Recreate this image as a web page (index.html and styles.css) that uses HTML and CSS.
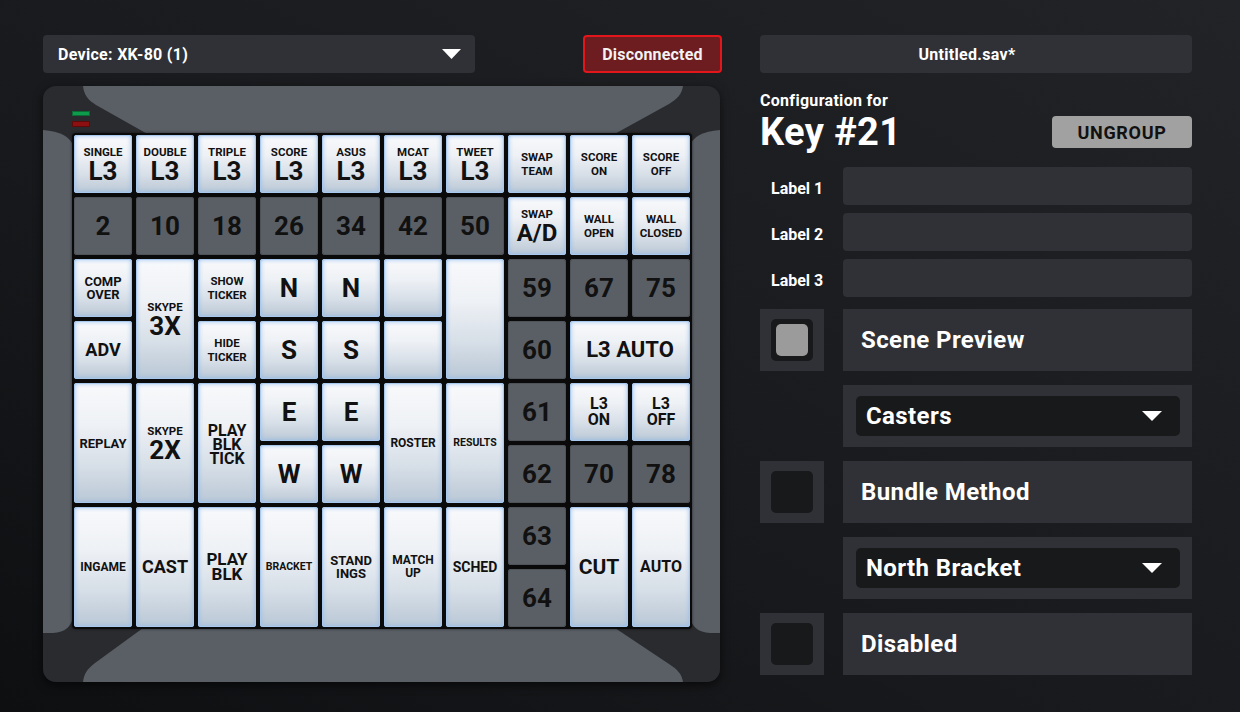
FILE: index.html
```html
<!DOCTYPE html>
<html>
<head>
<meta charset="utf-8">
<link rel="stylesheet" href="styles.css">
</head>
<body>
<div class="app">
  <section class="left">
    <div class="topbar">
      <div class="device-select">
        <span>Device: XK-80 (1)</span>
        <svg class="tri" width="19" height="10" viewBox="0 0 19 10"><polygon points="0,0 19,0 9.5,10" fill="#fff"/></svg>
      </div>
      <div class="status">Disconnected</div>
    </div>

    <div class="device">
      <svg class="device-bg" width="677" height="596" viewBox="0 0 677 596">
        <rect x="0" y="0" width="677" height="596" rx="13" fill="#2a2b2e"/>
        <path d="M40,0 C41,9 45,14 53,19 L108,50 L568,50 L626,18 C634,13 639,8 640,0 Z" fill="#5a5f66"/>
        <path d="M0,44 Q26,46 30,60 L30,530 Q28,546 10,547 L0,547 Z" fill="#5a5f66"/>
        <path d="M677,44 Q651,46 647,60 L647,530 Q649,546 667,547 L677,547 Z" fill="#5a5f66"/>
        <path d="M40,596 C41,588 44,583 52,577 L100,542 L572,542 L626,578 C634,583 639,588 640,596 Z" fill="#5a5f66"/>
      </svg>
      <div class="leds">
        <div class="led green"></div>
        <div class="led red"></div>
      </div>
      <div class="keys">
        <!-- row 1 -->
        <div class="key l"><span class="s">SINGLE</span><span class="b">L3</span></div>
        <div class="key l"><span class="s">DOUBLE</span><span class="b">L3</span></div>
        <div class="key l"><span class="s">TRIPLE</span><span class="b">L3</span></div>
        <div class="key l"><span class="s">SCORE</span><span class="b">L3</span></div>
        <div class="key l"><span class="s">ASUS</span><span class="b">L3</span></div>
        <div class="key l"><span class="s">MCAT</span><span class="b">L3</span></div>
        <div class="key l"><span class="s">TWEET</span><span class="b">L3</span></div>
        <div class="key l two">SWAP<br>TEAM</div>
        <div class="key l two">SCORE<br>ON</div>
        <div class="key l two">SCORE<br>OFF</div>
        <!-- row 2 -->
        <div class="key d">2</div>
        <div class="key d">10</div>
        <div class="key d">18</div>
        <div class="key d">26</div>
        <div class="key d">34</div>
        <div class="key d">42</div>
        <div class="key d">50</div>
        <div class="key l"><span class="s">SWAP</span><span class="b ad">A/D</span></div>
        <div class="key l two">WALL<br>OPEN</div>
        <div class="key l two">WALL<br>CLOSED</div>
        <!-- row 3 -->
        <div class="key l two f13">COMP<br>OVER</div>
        <div class="key l r2"><span class="s">SKYPE</span><span class="b">3X</span></div>
        <div class="key l two">SHOW<br>TICKER</div>
        <div class="key l big">N</div>
        <div class="key l big">N</div>
        <div class="key l"></div>
        <div class="key l r2"></div>
        <div class="key d">59</div>
        <div class="key d">67</div>
        <div class="key d">75</div>
        <!-- row 4 -->
        <div class="key l f18">ADV</div>
        <div class="key l two">HIDE<br>TICKER</div>
        <div class="key l big">S</div>
        <div class="key l big">S</div>
        <div class="key l"></div>
        <div class="key d">60</div>
        <div class="key l c2 f22">L3 AUTO</div>
        <!-- row 5 -->
        <div class="key l r2 f13">REPLAY</div>
        <div class="key l r2"><span class="s">SKYPE</span><span class="b">2X</span></div>
        <div class="key l r2 f16 lh14 down">PLAY<br>BLK<br>TICK</div>
        <div class="key l big">E</div>
        <div class="key l big">E</div>
        <div class="key l r2 f12">ROSTER</div>
        <div class="key l r2 f105">RESULTS</div>
        <div class="key d">61</div>
        <div class="key l f15 lh16">L3<br>ON</div>
        <div class="key l f15 lh16">L3<br>OFF</div>
        <!-- row 6 -->
        <div class="key l big">W</div>
        <div class="key l big">W</div>
        <div class="key d">62</div>
        <div class="key d">70</div>
        <div class="key d">78</div>
        <!-- row 7 -->
        <div class="key l r2 f12">INGAME</div>
        <div class="key l r2 f18">CAST</div>
        <div class="key l r2 f17 lh15">PLAY<br>BLK</div>
        <div class="key l r2 f105">BRACKET</div>
        <div class="key l r2 two f13">STAND<br>INGS</div>
        <div class="key l r2 two f12">MATCH<br>UP</div>
        <div class="key l r2 f14">SCHED</div>
        <div class="key d">63</div>
        <div class="key l r2 f21">CUT</div>
        <div class="key l r2 f16">AUTO</div>
        <!-- row 8 -->
        <div class="key d">64</div>
      </div>
    </div>
  </section>

  <section class="right">
    <div class="file">Untitled.sav*</div>
    <div class="config-for">Configuration for</div>
    <div class="title-row">
      <div class="key-title">Key #21</div>
      <div class="ungroup">UNGROUP</div>
    </div>
    <div class="labels">
      <div class="label-row"><span class="label">Label 1</span><div class="input"></div></div>
      <div class="label-row"><span class="label">Label 2</span><div class="input"></div></div>
      <div class="label-row"><span class="label">Label 3</span><div class="input"></div></div>
    </div>
    <div class="options">
      <div class="opt-row">
        <div class="check-cell"><div class="check on"></div></div>
        <div class="field">Scene Preview</div>
      </div>
      <div class="opt-row">
        <div class="spacer"></div>
        <div class="field select">
          <div class="dropdown"><span>Casters</span><svg width="20" height="10" viewBox="0 0 20 10"><polygon points="0,0 20,0 10,10" fill="#fff"/></svg></div>
        </div>
      </div>
      <div class="opt-row">
        <div class="check-cell"><div class="check"></div></div>
        <div class="field">Bundle Method</div>
      </div>
      <div class="opt-row">
        <div class="spacer"></div>
        <div class="field select">
          <div class="dropdown"><span>North Bracket</span><svg width="20" height="10" viewBox="0 0 20 10"><polygon points="0,0 20,0 10,10" fill="#fff"/></svg></div>
        </div>
      </div>
      <div class="opt-row">
        <div class="check-cell"><div class="check"></div></div>
        <div class="field">Disabled</div>
      </div>
    </div>
  </section>
</div>
</body>
</html>
```

FILE: styles.css
```css
* { box-sizing: border-box; }

html, body {
  margin: 0;
  padding: 0;
}

body {
  width: 1240px;
  height: 712px;
  overflow: hidden;
  background: linear-gradient(30deg, #0e0f11 0%, #18191c 40%, #222327 100%);
  font-family: Roboto, "Liberation Sans", sans-serif;
  color: #fff;
}

.app {
  display: flex;
  gap: 38px;
  padding: 35px 48px 0 43px;
}

/* ---------- left ---------- */
.left {
  width: 679px;
  display: flex;
  flex-direction: column;
}

.topbar {
  display: flex;
  justify-content: space-between;
  height: 38px;
}

.device-select {
  width: 432px;
  height: 38px;
  background: #2f3136;
  border-radius: 4px;
  display: flex;
  align-items: center;
  justify-content: space-between;
  padding: 0 14px 0 15px;
  font-size: 16px;
  letter-spacing: 0.3px;
  font-weight: 700;
}

.status {
  width: 139px;
  height: 38px;
  background: #6d1c1f;
  border: 2px solid #e3161b;
  border-radius: 4px;
  display: flex;
  align-items: center;
  justify-content: center;
  font-size: 16px;
  letter-spacing: 0.2px;
  font-weight: 700;
  color: #f2f2f2;
}

.device {
  position: relative;
  margin-top: 13px;
  width: 677px;
  height: 596px;
  border-radius: 13px;
  box-shadow: 0 3px 10px rgba(0, 0, 0, 0.6);
  padding: 25px 0 0 29px;
}

.device-bg {
  position: absolute;
  left: 0;
  top: 0;
  z-index: 0;
}

.leds {
  position: relative;
  z-index: 1;
  display: flex;
  flex-direction: column;
  gap: 5px;
  height: 16px;
}

.led {
  width: 18px;
  height: 5px;
  border-radius: 1px;
}
.led.green { background: #0f9b4c; box-shadow: inset 0 0 0 1px #0a6b33; }
.led.red { background: #8c1011; height: 6px; box-shadow: inset 0 0 0 1px #5e0a0b; }

.keys {
  position: relative;
  z-index: 1;
  margin-top: 6px;
  width: 620px;
  padding: 2px;
  background: #0a0a0a;
  border-radius: 4px;
  box-shadow: 0 0 3px rgba(0, 0, 0, 0.6);
  display: grid;
  grid-template-columns: repeat(10, 58px);
  grid-auto-rows: 58px;
  gap: 4px;
}

.key {
  border-radius: 3px;
  display: flex;
  flex-direction: column;
  align-items: center;
  justify-content: center;
  text-align: center;
  font-family: Roboto, "Liberation Sans", sans-serif;
  font-weight: 700;
  color: #111;
  line-height: 1;
}

.key.l {
  background: linear-gradient(180deg, #f8f9fb 0%, #eef1f5 35%, #d6dee7 70%, #b9c7d5 100%);
  box-shadow: inset 0 0 0 1px #a8c8ee, inset 0 0 4px 1px rgba(140, 185, 240, 0.75);
}

.key.d {
  background: #5a5f66;
  box-shadow: inset 0 0 0 1px #4e535a;
  font-size: 26px;
}

.key.r2 { grid-row: span 2; }
.key.c2 { grid-column: span 2; }

.key .s {
  font-size: 11.5px;
  line-height: 14px;
}
.key .b {
  font-size: 26px;
  line-height: 24px;
}
.key .b.ad {
  font-size: 24px;
}

.key.two {
  font-size: 11.5px;
  line-height: 14px;
}
.key.big { font-size: 26px; }
.key.lh14 { line-height: 14px; }
.key.lh15 { line-height: 15px; }
.key.lh16 { line-height: 16px; }
.key.down { padding-top: 4px; }

.key.f105 { font-size: 10.5px; }
.key.f12 { font-size: 12px; }
.key.f13 { font-size: 13px; }
.key.two.f13 { line-height: 13.5px; }
.key.two.f12 { line-height: 13.5px; }
.key.f14 { font-size: 14px; }
.key.f15 { font-size: 16px; }
.key.f16 { font-size: 16px; }
.key.f17 { font-size: 17px; }
.key.f18 { font-size: 18px; }
.key.f21 { font-size: 21px; }
.key.f22 { font-size: 22px; }

/* ---------- right ---------- */
.right {
  width: 432px;
  display: flex;
  flex-direction: column;
}

.file {
  height: 38px;
  background: #2f3136;
  border-radius: 4px;
  display: flex;
  align-items: center;
  justify-content: center;
  padding-right: 18px;
  font-size: 16px;
  letter-spacing: 0.3px;
  font-weight: 700;
}

.config-for {
  margin-top: 20px;
  font-size: 16px;
  letter-spacing: 0.3px;
  line-height: 16px;
  font-weight: 700;
}

.title-row {
  margin-top: 4px;
  height: 38px;
  display: flex;
  align-items: center;
  justify-content: space-between;
}

.key-title {
  font-size: 38px;
  line-height: 38px;
  letter-spacing: 0.4px;
  font-weight: 700;
}

.ungroup {
  width: 140px;
  height: 32px;
  background: #a1a1a1;
  border-radius: 4px;
  color: #111;
  font-size: 18px;
  letter-spacing: 0.7px;
  font-weight: 700;
  display: flex;
  align-items: center;
  justify-content: center;
}

.labels {
  margin-top: 16px;
  display: flex;
  flex-direction: column;
  gap: 8px;
}

.label-row {
  display: flex;
  height: 38px;
}

.label {
  width: 83px;
  padding: 4px 0 0 11px;
  display: flex;
  align-items: center;
  font-size: 16px;
  font-weight: 700;
}

.input {
  flex: 1;
  background: #2f3136;
  border-radius: 4px;
}

.options {
  margin-top: 12px;
  display: flex;
  flex-direction: column;
  gap: 14px;
}

.opt-row {
  display: grid;
  grid-template-columns: 64px 349px;
  column-gap: 19px;
  height: 62px;
}

.check-cell {
  background: #2f3136;
  display: flex;
  align-items: center;
  justify-content: center;
}

.check {
  width: 42px;
  height: 42px;
  border-radius: 5px;
  background: #18191b;
  display: flex;
  align-items: center;
  justify-content: center;
}

.check.on::after {
  content: "";
  width: 32px;
  height: 32px;
  border-radius: 5px;
  background: #9b9b9b;
}

.field {
  background: #2f3136;
  display: flex;
  align-items: center;
  padding-left: 18px;
  font-size: 24px;
  letter-spacing: 0.4px;
  font-weight: 700;
}

.field.select {
  padding: 0 12px 0 13px;
}

.dropdown {
  flex: 1;
  height: 40px;
  background: #18191b;
  border-radius: 5px;
  display: flex;
  align-items: center;
  justify-content: space-between;
  padding: 0 18px 0 10px;
}
```
